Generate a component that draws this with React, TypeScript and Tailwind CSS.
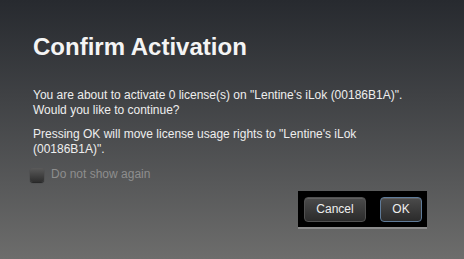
import React from "react";

const App = () => {
  return (
    <div
      className="w-[464px] h-[259px] overflow-hidden bg-gradient-to-b from-[#272a2f] to-[#6d6d6c] text-white"
      style={{ fontFamily: '"Liberation Sans", Arial, sans-serif' }}
    >
      <div className="pl-[33px] pt-[35px]">
        {/* Title */}
        <h1 className="text-[24px] leading-[24px] font-bold text-[#f4f4f4]">
          Confirm Activation
        </h1>

        {/* Body */}
        <p className="mt-[29px] text-[12px] leading-[15px] text-[#eeeeee]">
          You are about to activate 0 license(s) on "Lentine's iLok (00186B1A)".
          <br />
          Would you like to continue?
        </p>
        <p className="mt-[9px] text-[12px] leading-[15px] text-[#eeeeee]">
          Pressing OK will move license usage rights to "Lentine's iLok
          <br />
          (00186B1A)".
        </p>

        {/* Checkbox */}
        <div className="mt-[10px] flex items-center -ml-[3px]">
          <div className="w-[14px] h-[14px] rounded-[3px] bg-gradient-to-b from-[#5a5a5a] to-[#2e2e2e] shadow-[0_1px_1px_rgba(0,0,0,0.6)]" />
          <span className="ml-[7px] text-[12px] leading-[15px] text-[#8e8e8e]">
            Do not show again
          </span>
        </div>
      </div>

      {/* Buttons */}
      <div className="mt-[9px] flex justify-end pr-[37px]">
        <div className="flex items-center gap-[14px] bg-black pl-[6px] pr-[5px] h-[38px] border-b-2 border-[#8c8c8c]">
          <button className="w-[62px] h-[25px] rounded-[4px] border border-[#505050] bg-gradient-to-b from-[#4b4b4b] to-[#2b2b2b] text-[12px] text-[#eeeeee] shadow-[inset_0_1px_0_rgba(255,255,255,0.12)]">
            Cancel
          </button>
          <button className="w-[42px] h-[25px] rounded-[4px] border border-[#5f7b99] bg-gradient-to-b from-[#4b4b4b] to-[#2b2b2b] text-[12px] text-[#eeeeee] shadow-[inset_0_1px_0_rgba(255,255,255,0.12)]">
            OK
          </button>
        </div>
      </div>
    </div>
  );
};

export default App;
